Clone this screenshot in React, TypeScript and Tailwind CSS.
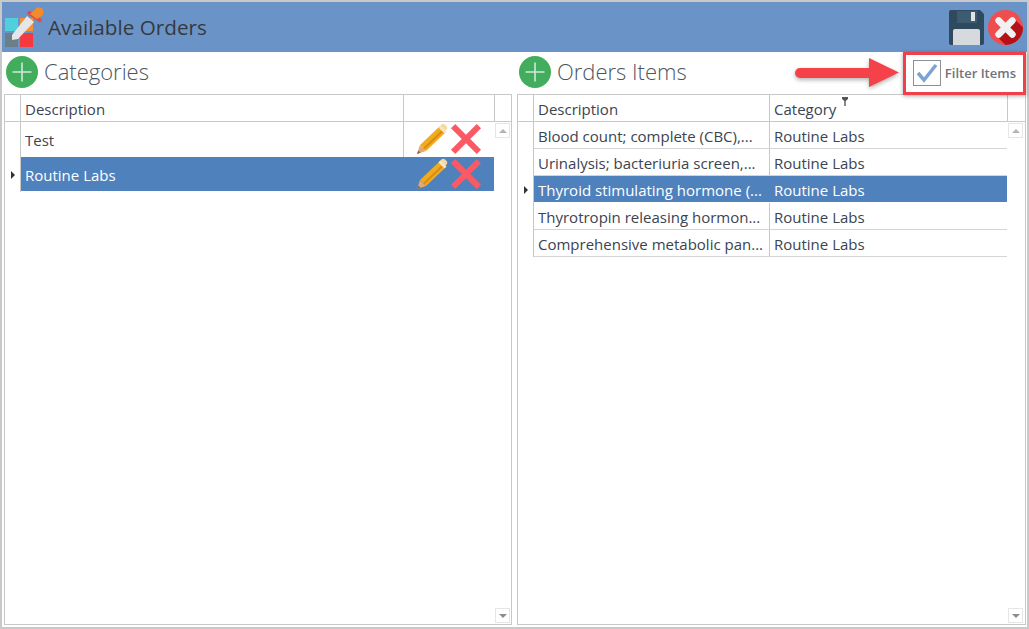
import React from 'react'

const font = { fontFamily: '"Open Sans", "Noto Sans", sans-serif' }

function AddIcon() {
  return (
    <svg width="32" height="32" viewBox="0 0 32 32" className="shrink-0">
      <circle cx="16" cy="16" r="16" fill="#43ad5e" />
      <path d="M16 6.5v19M6.5 16h19" stroke="#cfe9d6" strokeWidth="1.6" />
    </svg>
  )
}

function Pencil() {
  return (
    <svg width="32" height="32" viewBox="0 0 32 32" className="shrink-0">
      <path d="M1 31l3-9 6 6z" fill="#e3a878" />
      <path d="M1 31l1.2-3.6 2.4 2.4z" fill="#8a6a4a" />
      <path d="M4 22L24 3l6 6-20 19z" fill="#f2ab1e" />
      <path d="M7 25L27 6l1.5 1.5-20 19z" fill="#d98e12" />
      <path d="M23 4l2.5-2.5c1-1 2.5-1 3.500 0l1.500 1.500c1 1 1 2.500 0 3.500L28 9z" fill="#f7d9a0" />
      <path d="M22.500 4.500l2-2 6 6-2 2z" fill="#f5e6c4" />
    </svg>
  )
}

function RedCross() {
  return (
    <svg width="32" height="32" viewBox="0 0 32 32" className="shrink-0">
      <path d="M3.100 3.100l25.800 25.800M28.900 3.100L3.100 28.900" stroke="#fb5a64" strokeWidth="6" />
    </svg>
  )
}

function ScrollBar() {
  return (
    <div className="flex-1 flex flex-col justify-between items-start pl-px pb-px pt-px">
      <div className="w-[15px] h-[15px] border border-[#e6e6e6] flex items-center justify-center">
        <div className="w-0 h-0 border-x-[4px] border-x-transparent border-b-[4px] border-b-[#b4b4b4]" />
      </div>
      <div className="w-[15px] h-[15px] border border-[#e6e6e6] flex items-center justify-center">
        <div className="w-0 h-0 border-x-[4px] border-x-transparent border-t-[4px] border-t-[#8c8c8c]" />
      </div>
    </div>
  )
}

function RowPointer({ active }: { active: boolean }) {
  return (
    <div className="w-[16px] shrink-0 border-r border-[#c8c8c8] flex items-center justify-center">
      {active && <div className="w-0 h-0 border-y-[4px] border-y-transparent border-l-[4px] border-l-[#333]" />}
    </div>
  )
}

const categories = [
  { name: 'Test', active: false },
  { name: 'Routine Labs', active: true },
]

const items = [
  { name: 'Blood count; complete (CBC),...', active: false },
  { name: 'Urinalysis; bacteriuria screen,...', active: false },
  { name: 'Thyroid stimulating hormone (...', active: true },
  { name: 'Thyrotropin releasing hormon...', active: false },
  { name: 'Comprehensive metabolic pan...', active: false },
]

export default function App() {
  return (
    <div style={font} className="w-[1029px] h-[629px] bg-[#c9c9c9] pt-[2px] px-[2px] pb-[2px] overflow-hidden relative text-[15px] text-[#3b4450]">
      <div className="w-[1025px] h-[625px] bg-white flex flex-col">
        {/* Title bar */}
        <div className="h-[50px] bg-[#6a94c8] flex items-center pl-[2px] pr-[4px] shrink-0">
          <svg width="44" height="44" viewBox="0 0 44 44" className="shrink-0">
            <rect x="1" y="13" width="13" height="13" fill="#4fd0dc" />
            <rect x="16" y="13" width="13" height="13" fill="#f3903a" />
            <rect x="1" y="28" width="13" height="14" fill="#6b7f88" />
            <rect x="16" y="28" width="13" height="14" fill="#f4393f" />
            <path d="M8 35v-5L23 11l7 6-16 17z" fill="#e4e6e8" />
            <path d="M24 7l13 9" stroke="#e8453c" strokeWidth="3.500" />
            <path d="M26 9l7-6 6 7-6 4z" fill="#f58a2a" />
            <circle cx="35" cy="7" r="4.500" fill="#f58a2a" />
          </svg>
          <div className="text-[20.7px] text-[#37393f] pt-[2px]">Available Orders</div>
          <div className="ml-auto flex items-center gap-[4px]">
            <svg width="35" height="35" viewBox="0 0 35 35">
              <path d="M0 2a2 2 0 012-2h29l4 4v29a2 2 0 01-2 2H2a2 2 0 01-2-2z" fill="#2f4a5e" />
              <rect x="8" y="1" width="20" height="12" fill="#3d5c72" />
              <rect x="22" y="2" width="4" height="9" fill="#dfe3e6" />
              <path d="M4 35V21a2 2 0 012-2h23a2 2 0 012 2v14z" fill="#d7dadc" />
            </svg>
            <svg width="35" height="35" viewBox="0 0 36 36">
              <circle cx="18" cy="18" r="18" fill="#f04e4e" />
              <path d="M18 18l9-9 9 9c0 10-8 18-18 18l-9-9z" fill="#b31217" />
              <path d="M11 11l14 14M25 11L11 25" stroke="#f2f0f0" strokeWidth="7" strokeLinecap="round" />
            </svg>
          </div>
        </div>

        <div className="flex flex-1 min-h-0 pl-[2px] pr-px pb-[2px] gap-[5px]">
          {/* Categories */}
          <div className="w-[508px] flex flex-col">
            <div className="h-[42px] flex items-center gap-[6px] pl-[2px] pb-[2px]">
              <AddIcon />
              <div className="text-[22px] font-light text-[#4b5563] pb-[2px]">Categories</div>
            </div>
            <div className="flex-1 border border-[#c8c8c8] flex flex-col">
              <div className="h-[27px] flex border-b border-[#c8c8c8] shrink-0">
                <div className="w-[16px] border-r border-[#c8c8c8]" />
                <div className="w-[383px] border-r border-[#c8c8c8] px-[4px] pt-[2px] flex items-center">Description</div>
                <div className="w-[91px] border-r border-[#c8c8c8]" />
              </div>
              <div className="flex flex-1 min-h-0">
                <div className="flex flex-col w-[489px]">
                  {categories.map((c) => (
                    <div key={c.name} className="h-[35px] flex">
                      <RowPointer active={c.active} />
                      <div className={`flex flex-1 ${c.active ? 'bg-[#4f81bd] text-white border-b border-white' : ''}`}>
                        <div className={`w-[383px] px-[4px] pt-[2px] flex items-center ${c.active ? '' : 'border-r border-[#c8c8c8]'}`}>{c.name}</div>
                        <div className="flex-1 flex items-center pl-[12px] pb-px gap-[2px]">
                          <Pencil />
                          <RedCross />
                        </div>
                      </div>
                    </div>
                  ))}
                </div>
                <ScrollBar />
              </div>
            </div>
          </div>

          {/* Orders Items */}
          <div className="w-[509px] flex flex-col">
            <div className="h-[42px] flex items-center gap-[6px] pl-[2px] pb-[2px]">
              <AddIcon />
              <div className="text-[22px] font-light text-[#4b5563] pb-[2px]">Orders Items</div>
              <div className="ml-auto mr-[10px] mt-[2px] flex items-center gap-[4px]">
                <div className="w-[28px] h-[26px] border border-[#8b8f96] bg-white flex items-center justify-center">
                  <svg width="22" height="20" viewBox="0 0 22 20">
                    <path d="M2 10l6 7L20 2" fill="none" stroke="#7ba3d4" strokeWidth="3.500" />
                  </svg>
                </div>
                <div className="text-[13px] font-semibold text-[#6e747c] pt-[2px]">Filter Items</div>
              </div>
            </div>
            <div className="flex-1 border border-[#c8c8c8] flex flex-col">
              <div className="h-[27px] flex border-b border-[#c8c8c8] shrink-0">
                <div className="w-[16px] border-r border-[#c8c8c8]" />
                <div className="w-[236px] border-r border-[#c8c8c8] px-[4px] pt-[2px] flex items-center">Description</div>
                <div className="w-[238px] border-r border-[#c8c8c8] px-[4px] pt-[2px] flex items-center relative">
                  Category
                  <svg width="6" height="9" viewBox="0 0 6 9" className="absolute left-[72px] top-[2px]">
                    <path d="M0 0h6v2L3.700 4v5H2.300V4L0 2z" fill="#555" />
                  </svg>
                </div>
              </div>
              <div className="flex flex-1 min-h-0">
                <div className="flex flex-col w-[489px]">
                  {items.map((r) => (
                    <div key={r.name} className="h-[27px] flex">
                      <RowPointer active={r.active} />
                      <div className={`flex flex-1 border-b ${r.active ? 'bg-[#4f81bd] text-white border-white' : 'border-[#d4d4d4]'}`}>
                        <div className={`w-[236px] px-[4px] pt-[2px] flex items-center whitespace-nowrap overflow-hidden ${r.active ? '' : 'border-r border-[#c8c8c8]'}`}>{r.name}</div>
                        <div className="flex-1 px-[4px] pt-[2px] flex items-center">Routine Labs</div>
                      </div>
                    </div>
                  ))}
                </div>
                <ScrollBar />
              </div>
            </div>
          </div>
        </div>
      </div>

      {/* Annotation */}
      <div className="absolute left-[903px] top-[52px] w-[123px] h-[43px] border-[3px] border-[#f0414a] shadow-[0_1px_4px_rgba(0,0,0,0.35)]" />
      <svg width="110" height="36" viewBox="0 0 110 36" className="absolute left-[793px] top-[55px] drop-shadow-[0_2px_2px_rgba(0,0,0,0.3)]">
        <path d="M7 13h69V3l30 14.500L76 32V23H7a5 5 0 010-10z" fill="#f4414a" />
      </svg>
    </div>
  )
}
